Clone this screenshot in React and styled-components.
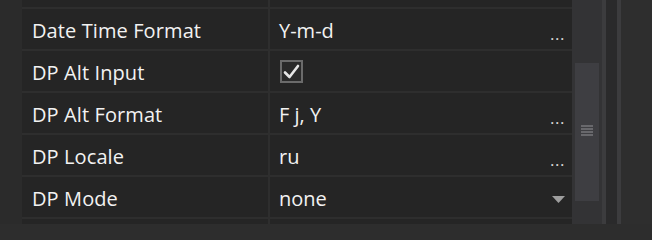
import React from 'react'
import { styled, createGlobalStyle } from 'styled-components'

const GlobalStyle = createGlobalStyle`
  html, body {
    margin: 0;
    padding: 0;
    background: #2d2d2d;
    overflow: hidden;
  }
  body {
    font-family: "Open Sans", "Noto Sans", sans-serif;
  }
`;

const rows = [
    { label: '', value: '', kind: 'blank' },
    { label: 'Date Time Format', value: 'Y-m-d', kind: 'text' },
    { label: 'DP Alt Input', value: true, kind: 'check' },
    { label: 'DP Alt Format', value: 'F j, Y', kind: 'text' },
    { label: 'DP Locale', value: 'ru', kind: 'text' },
    { label: 'DP Mode', value: 'none', kind: 'select' },
    { label: '', value: '', kind: 'blank' },
];

const App = () => {
  return (
    <>
      <GlobalStyle />
      <Screen>
        <Gutter />
        <Viewport>
          <List>
            {rows.map((row, i) => (
              <Row key={i}>
                <Label>{row.label}</Label>
                <Value>
                  {row.kind === 'check' && (
                    <CheckBox>
                      <svg width="17" height="15" viewBox="0 0 17 15">
                        <path d="M2 8.5 L6.5 13 L15 2" fill="none" stroke="#e6e6e6" strokeWidth="2.6" strokeLinecap="round" strokeLinejoin="round" />
                      </svg>
                    </CheckBox>
                  )}
                  {(row.kind === 'text' || row.kind === 'select') && <ValueText>{row.value}</ValueText>}
                  {row.kind === 'text' && <Ellipsis>...</Ellipsis>}
                  {row.kind === 'select' && (
                    <Caret>
                      <svg width="13" height="7" viewBox="0 0 13 7">
                        <path d="M0 0 H13 L6.5 7 Z" fill="#9e9e9e" />
                      </svg>
                    </Caret>
                  )}
                </Value>
              </Row>
            ))}
          </List>
        </Viewport>
        <ScrollTrack>
          <Thumb>
            <Grip>
              <span /><span /><span /><span />
            </Grip>
          </Thumb>
        </ScrollTrack>
        <Divider />
        <DarkStrip />
        <Divider />
        <SidePanel />
      </Screen>
    </>
  )
}

const Screen = styled.div`
    display: flex;
    width: 652px;
    height: 224px;
    overflow: hidden;
`;

const Gutter = styled.div`
    width: 22px;
    flex: none;
    background: #2b2b2b;
`;

const Viewport = styled.div`
    width: 550px;
    flex: none;
    height: 224px;
    overflow: hidden;
    background: #252525;
`;

const List = styled.div`
    display: flex;
    flex-direction: column;
    margin-top: -33px;
`;

const Row = styled.div`
    display: grid;
    grid-template-columns: 246px 302px;
    column-gap: 2px;
    height: 40px;
    border-bottom: 2px solid #2e2e2e;
    background: #2e2e2e;
`;

const Label = styled.div`
    background: #252525;
    display: flex;
    align-items: center;
    padding-left: 10px;
    padding-top: 3px;
    box-sizing: border-box;
    color: #f2f2f2;
    font-size: 20px;
    letter-spacing: 0.1px;
`;

const Value = styled.div`
    background: #252525;
    display: flex;
    align-items: center;
    padding-left: 9px;
    padding-right: 7px;
    padding-top: 3px;
    box-sizing: border-box;
    color: #f2f2f2;
    font-size: 20px;
`;

const ValueText = styled.span`
    flex: 1;
`;

const Ellipsis = styled.span`
    color: #d8d8d8;
    font-size: 17px;
    letter-spacing: 0.5px;
    margin-top: 6px;
`;

const Caret = styled.span`
    display: flex;
    margin-top: 2px;
`;

const CheckBox = styled.div`
    width: 19px;
    height: 19px;
    margin-left: 1px;
    margin-top: -3px;
    border: 2px solid #6b6b6b;
    background: #2a2a2a;
    display: flex;
    align-items: center;
    justify-content: center;
`;

const ScrollTrack = styled.div`
    width: 30px;
    flex: none;
    background: #333335;
    padding: 63px 3px 0 3px;
    box-sizing: border-box;
`;

const Thumb = styled.div`
    height: 138px;
    background: #3e3e42;
    display: flex;
    justify-content: center;
    padding-top: 62px;
    box-sizing: border-box;
`;

const Grip = styled.div`
    display: flex;
    flex-direction: column;
    gap: 1px;
    width: 12px;
    span {
        display: block;
        height: 2px;
        background: #68686c;
    }
`;

const Divider = styled.div`
    width: 4px;
    flex: none;
    background: #3c3c3e;
`;

const DarkStrip = styled.div`
    width: 11px;
    flex: none;
    background: #2a2a2b;
`;

const SidePanel = styled.div`
    flex: 1;
    background: #2e2e2e;
`;

export default App
